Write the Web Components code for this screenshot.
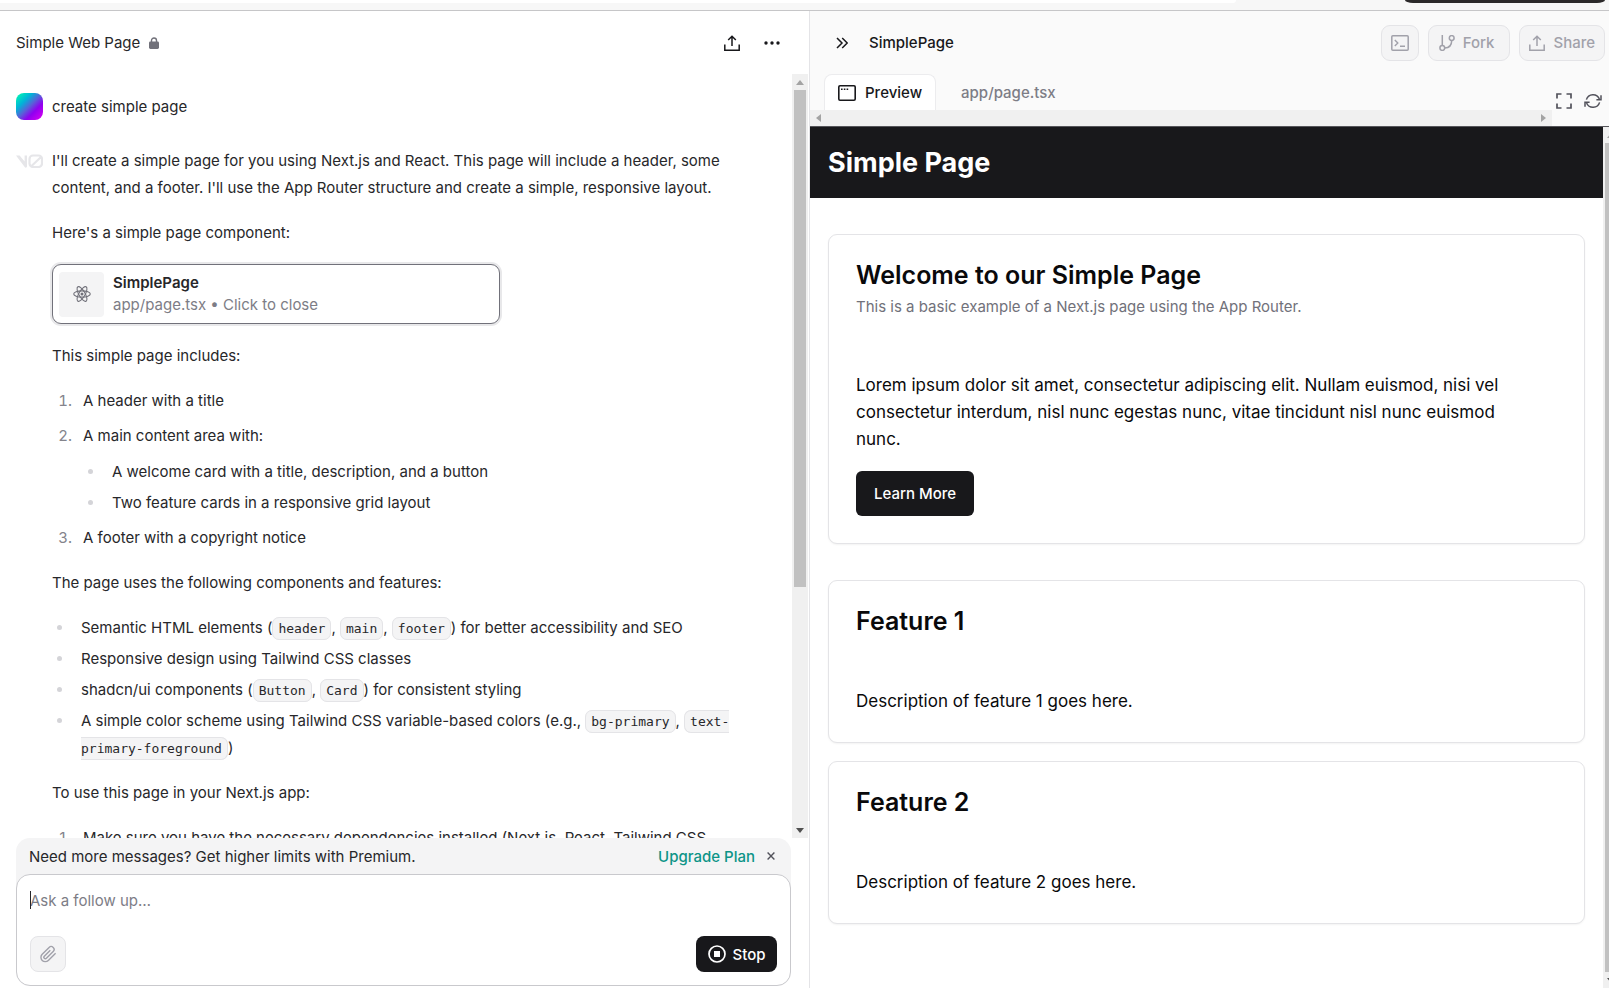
<!DOCTYPE html>
<html lang="en">
<head>
<meta charset="utf-8">
<title>Simple Web Page</title>
<style>
  html, body { height: 100%; margin: 0; }
  body {
    display: flex; flex-direction: column; overflow: hidden;
    font: 400 15px/27px Inter, "Liberation Sans", sans-serif; color: #27272a; background: #fff;
  }
</style>
</head>
<body>
<browser-edge></browser-edge>
<split-view>
  <chat-panel slot="left" heading="Simple Web Page">
    <chat-message>
      <user-avatar slot="avatar"></user-avatar>
      <rich-text><p>create simple page</p></rich-text>
    </chat-message>
    <chat-message>
      <ui-icon slot="avatar" name="v0"></ui-icon>
      <assistant-reply></assistant-reply>
    </chat-message>
    <chat-composer slot="composer"></chat-composer>
  </chat-panel>
  <preview-panel slot="right" heading="SimplePage">
    <site-page></site-page>
  </preview-panel>
</split-view>

<script>
const define = (name, html) => {
  const template = document.createElement('template');
  template.innerHTML = html;
  customElements.define(name, class extends HTMLElement {
    constructor() {
      super();
      this.attachShadow({ mode: 'open' }).append(template.content.cloneNode(true));
    }
    connectedCallback() {
      const h = this.shadowRoot.querySelector('[data-heading]');
      if (h) h.textContent = this.getAttribute('heading');
    }
  });
};

const ICONS = {
  lock: [10, 12, '<path d="M2.5 5V3.5a2.5 2.5 0 0 1 5 0V5" fill="none" stroke="currentColor" stroke-width="1.4"/><rect x="0" y="4.6" width="10" height="7.4" rx="1.4"/>'],
  share: [16, 16, '<path d="M.8 9.5v5.7h14.4V9.5M8 11V1.4M4.2 5 8 1.2 11.8 5" fill="none" stroke="currentColor" stroke-width="1.5"/>'],
  dots: [16, 16, '<circle cx="2" cy="8" r="1.7"/><circle cx="8" cy="8" r="1.7"/><circle cx="14" cy="8" r="1.7"/>'],
  chevrons: [12, 12, '<path d="M1 1l5 5-5 5M6.2 1l5 5-5 5" fill="none" stroke="currentColor" stroke-width="1.5"/>'],
  window: [18, 16, '<rect x=".8" y=".8" width="16.4" height="14.4" rx="1.2" fill="none" stroke="currentColor" stroke-width="1.6"/><path d="M3 3.6h1.6v1.4H3zM5.8 3.6h1.6v1.4H5.8zM8.6 3.6h1.6v1.4H8.6z"/>'],
  terminal: [18, 16, '<rect x=".8" y=".8" width="16.4" height="14.4" rx="1" fill="none" stroke="currentColor" stroke-width="1.5"/><path d="M3.8 5l3 3-3 3M9 11.2h5" fill="none" stroke="currentColor" stroke-width="1.4"/>'],
  fork: [16, 16, '<g fill="none" stroke="currentColor" stroke-width="1.5"><circle cx="3.3" cy="13" r="2.4"/><circle cx="12.7" cy="3" r="2.4"/><path d="M3.3 0v10.6M12.7 5.4c0 4.4-2.6 7.4-7 7.5"/></g>'],
  expand: [16, 16, '<path d="M1 5.5V1h4.500M10.500 1H15v4.500M15 10.500V15h-4.500M5.500 15H1v-4.500" fill="none" stroke="currentColor" stroke-width="1.7"/>'],
  refresh: [18, 16, '<path d="M2.4 6.6A6.9 6.9 0 0 1 15.4 6M17 2.2v4.6h-4.6M15.6 9.4A6.9 6.9 0 0 1 2.6 10M1 13.8V9.2h4.6" fill="none" stroke="currentColor" stroke-width="1.5"/>'],
  react: [18, 18, '<g fill="none" stroke="currentColor" stroke-width="1.1"><ellipse cx="9" cy="9" rx="8.3" ry="3.1"/><ellipse cx="9" cy="9" rx="8.3" ry="3.1" transform="rotate(60 9 9)"/><ellipse cx="9" cy="9" rx="8.3" ry="3.1" transform="rotate(120 9 9)"/></g><circle cx="9" cy="9" r="1.5"/>'],
  clip: [18, 18, '<path d="M16.6 8.2l-7.3 7.2a4.3 4.3 0 0 1-6.1 0 4.3 4.3 0 0 1 0-6.1l6.9-6.9a2.9 2.9 0 0 1 4.1 0 2.9 2.9 0 0 1 0 4.1l-6.8 6.8a1.5 1.5 0 0 1-2.1 0 1.5 1.5 0 0 1 0-2.1l6-6" fill="none" stroke="currentColor" stroke-width="1.4"/>'],
  stop: [18, 18, '<circle cx="9" cy="9" r="8" fill="none" stroke="currentColor" stroke-width="1.7"/><rect x="6" y="6" width="6" height="6"/>'],
  close: [8, 8, '<path d="M.6.6l6.8 6.8M7.4.6L.6 7.4" fill="none" stroke="currentColor" stroke-width="1.4"/>'],
  up: [8, 5, '<path d="M0 5l4-5 4 5z"/>'],
  down: [8, 5, '<path d="M0 0l4 5 4-5z"/>'],
  left: [5, 8, '<path d="M5 0L0 4l5 4z"/>'],
  right: [5, 8, '<path d="M0 0l5 4-5 4z"/>'],
  v0: [27, 14, '<path d="M0 1.500h3.600L8.600 7.500V1.500h2.400v10.800c0 1.300-1.400 1.800-2.300.8z"/><path d="M17 1.500h5.500a3.500 3.500 0 0 1 3.500 3.500v4.500a3.500 3.500 0 0 1-3.500 3.500h-5.500a3.500 3.500 0 0 1-3.500-3.500V5a3.500 3.500 0 0 1 3.500-3.500zM15 12.500L25 3" fill="none" stroke="currentColor" stroke-width="2.200"/>']
};
customElements.define('ui-icon', class extends HTMLElement {
  connectedCallback() {
    const [w, h, body] = ICONS[this.getAttribute('name')];
    if (!this.shadowRoot) this.attachShadow({ mode: 'open' });
    this.shadowRoot.innerHTML =
      `<style>:host{display:inline-flex;flex:none}svg{display:block;fill:currentColor}</style>
       <svg width="${w}" height="${h}" viewBox="0 0 ${w} ${h}" aria-hidden="true">${body}</svg>`;
  }
});

define('browser-edge', `
<style>
  :host { display: flex; flex: none; height: 10px; background: #f7f7f7; border-bottom: 1px solid #c6c6c8; }
  .address { flex: 1; height: 3px; margin-right: 169px; background: #fff; border-radius: 0 0 12px 0; }
  .pill { width: 200px; height: 3px; margin-right: 4px; background: #2b292a; border-radius: 0 0 8px 8px / 0 0 3px 3px; }
</style>
<div class="address"></div><div class="pill"></div>`);

define('split-view', `
<style>
  :host { display: grid; grid-template-columns: 809fr 800fr; flex: 1; min-height: 0; }
  ::slotted(*) { min-width: 0; min-height: 0; }
</style>
<slot name="left"></slot><slot name="right"></slot>`);

define('scroll-bar', `
<style>
  :host { display: flex; flex-direction: column; align-items: center; flex: none; width: 16px;
          background: #f0f0f0; color: #a3a3a3; overflow: hidden; }
  .cap { flex: none; display: flex; align-items: center; justify-content: center; width: 16px; height: 16px; }
  .cap.end { color: #505050; }
  .track { flex: 1; width: 12px; display: flex; flex-direction: column; }
  .thumb { flex: var(--thumb, 1) 0 0; background: #c1c1c1; }
  .rest { flex: var(--rest, 0) 0 0; }
</style>
<div class="cap"><ui-icon name="up"></ui-icon></div>
<div class="track"><div class="thumb"></div><div class="rest"></div></div>
<div class="cap end"><ui-icon name="down"></ui-icon></div>`);

define('chat-panel', `
<style>
  :host { display: flex; flex-direction: column; background: #fff; }
  header { flex: none; height: 63px; box-sizing: border-box; padding: 0 29px 0 16px; display: flex; align-items: center; }
  h1 { margin: 0; font: inherit; }
  .lock { color: #71717a; margin-left: 9px; }
  .spacer { flex: 1; }
  button { all: unset; display: flex; margin-left: 24px; color: #18181b; }
  .body { flex: 1; min-height: 0; display: flex; margin-right: 1px; }
  .log { flex: 1; min-width: 0; overflow: hidden; box-sizing: border-box; padding: 19px 54px 0 16px;
         display: flex; flex-direction: column; gap: 27px; }
  scroll-bar { --thumb: 497; --rest: 235; }
</style>
<header>
  <h1 data-heading></h1><ui-icon class="lock" name="lock"></ui-icon><div class="spacer"></div>
  <button aria-label="Share"><ui-icon name="share"></ui-icon></button>
  <button aria-label="More"><ui-icon name="dots"></ui-icon></button>
</header>
<div class="body"><div class="log"><slot></slot></div><scroll-bar></scroll-bar></div>
<slot name="composer"></slot>`);

define('chat-message', `
<style>
  :host { display: grid; grid-template-columns: 27px 1fr; column-gap: 9px; flex: none; }
  .avatar { height: 27px; display: flex; align-items: center; color: #e6e6e9; }
</style>
<div class="avatar"><slot name="avatar"></slot></div><div><slot></slot></div>`);

define('user-avatar', `
<style>
  :host { display: block; width: 27px; height: 27px; border-radius: 8px;
          background: linear-gradient(135deg, #00f5b4 5%, #00b4d8 30%, #5a5fd8 50%, #8f00f0 68%, #d400f0 95%); }
</style>`);

define('rich-text', `
<style>:host { display: block; } ::slotted(p) { margin: 0; }</style><slot></slot>`);

define('artifact-card', `
<style>
  :host { display: block; max-width: 448px; }
  button { all: unset; box-sizing: border-box; width: 100%; height: 60px; padding: 0 6px; display: flex; align-items: center;
           gap: 9px; background: #fff; border: 1px solid #71717a; border-radius: 9px; box-shadow: 0 0 0 2px #e8e8ea; }
  .thumb { width: 45px; height: 45px; border-radius: 4px; background: #f4f4f5; color: #71717a;
           display: flex; align-items: center; justify-content: center; }
  .text { display: flex; flex-direction: column; line-height: 22px; }
  strong { font-weight: 600; }
  .path { color: #7d7d86; }
</style>
<button>
  <span class="thumb"><ui-icon name="react"></ui-icon></span>
  <span class="text"><strong>SimplePage</strong><span class="path">app/page.tsx • Click to close</span></span>
</button>`);

define('assistant-reply', `
<style>
  :host { display: flex; flex-direction: column; gap: 18px; }
  p, ul, ol { margin: 0; padding: 0; }
  ol { padding-left: 24px; display: flex; flex-direction: column; gap: 8px; }
  ol > li { padding-left: 7px; }
  ul { padding-left: 22px; display: flex; flex-direction: column; gap: 4px; list-style: disc; }
  ul > li { padding-left: 7px; }
  ol ul { margin-top: 9px; }
  ol > li::marker { color: #84848c; }
  ul > li::marker { color: #d4d4d8; }
  code { font: 13px "DejaVu Sans Mono", monospace; padding: 3px 5px; border: 1px solid #e4e4e7;
         border-radius: 7px; background: #f4f4f5; }
</style>
<p>I'll create a simple page for you using Next.js and React. This page will include a header, some content, and a footer. I'll use the App Router structure and create a simple, responsive layout.</p>
<p>Here's a simple page component:</p>
<artifact-card></artifact-card>
<p>This simple page includes:</p>
<ol>
  <li>A header with a title</li>
  <li>A main content area with:
    <ul>
      <li>A welcome card with a title, description, and a button</li>
      <li>Two feature cards in a responsive grid layout</li>
    </ul>
  </li>
  <li>A footer with a copyright notice</li>
</ol>
<p>The page uses the following components and features:</p>
<ul>
  <li>Semantic HTML elements (<code>header</code>, <code>main</code>, <code>footer</code>) for better accessibility and SEO</li>
  <li>Responsive design using Tailwind CSS classes</li>
  <li>shadcn/ui components (<code>Button</code>, <code>Card</code>) for consistent styling</li>
  <li>A simple color scheme using Tailwind CSS variable-based colors (e.g., <code>bg-primary</code>, <code>text-primary-foreground</code>)</li>
</ul>
<p>To use this page in your Next.js app:</p>
<ol>
  <li>Make sure you have the necessary dependencies installed (Next.js, React, Tailwind CSS,</li>
</ol>`);

define('chat-composer', `
<style>
  :host { display: block; flex: none; margin: 0 18px 2px 16px; border-radius: 14px; background: #f4f4f5; }
  .banner { height: 36px; padding: 0 16px 0 13px; display: flex; align-items: center; }
  .banner span { flex: 1; }
  a { color: #0d9488; font-weight: 500; text-decoration: none; margin-right: 12px; }
  button { all: unset; box-sizing: border-box; display: flex; align-items: center; justify-content: center; }
  .close { color: #52525b; }
  form { box-sizing: border-box; height: 112px; padding: 12px 13px 13px; border: 1px solid #c9c9cd; border-radius: 14px;
         background: #fff; display: flex; flex-direction: column; position: relative; }
  textarea { flex: 1; border: 0; padding: 0; margin: 0; resize: none; outline: 0; background: none;
             font: inherit; color: inherit; min-height: 0; overflow: hidden; }
  textarea::placeholder { color: #7d7d86; opacity: 1; }
  .caret { position: absolute; left: 13px; top: 16px; width: 1px; height: 18px; background: #27272a; }
  .row { display: flex; justify-content: space-between; }
  .attach { width: 36px; height: 36px; border: 1px solid #e4e4e7; border-radius: 8px; background: #f4f4f5; color: #a1a1aa; }
  .stop { width: 81px; height: 36px; gap: 7px; border-radius: 8px; background: #18181b; color: #fff; font-weight: 500; }
</style>
<div class="banner">
  <span>Need more messages? Get higher limits with Premium.</span>
  <a href="#upgrade">Upgrade Plan</a>
  <button class="close" aria-label="Dismiss"><ui-icon name="close"></ui-icon></button>
</div>
<form>
  <textarea aria-label="Follow up" placeholder="Ask a follow up…"></textarea>
  <i class="caret"></i>
  <div class="row">
    <button type="button" class="attach" aria-label="Attach file"><ui-icon name="clip"></ui-icon></button>
    <button type="button" class="stop"><ui-icon name="stop"></ui-icon>Stop</button>
  </div>
</form>`);

define('preview-panel', `
<style>
  :host { display: flex; flex-direction: column; background: #fafafa; border-left: 1px solid #e4e4e7; }
  header { flex: none; height: 63px; box-sizing: border-box; padding: 0 4px 0 26px; display: flex; align-items: center; color: #18181b; }
  h2 { margin: 0 0 0 21px; font: inherit; font-weight: 500; flex: 1; }
  button { all: unset; display: flex; align-items: center; justify-content: center; }
  .actions { display: flex; gap: 9px; color: #a1a1aa; }
  .actions button { box-sizing: border-box; height: 36px; padding: 0 9px; gap: 8px; border: 1px solid #e4e4e7;
                    border-radius: 9px; background: #f4f4f5; font-weight: 500; }
  .actions .fork { padding: 0 15px 0 10px; }
  .bar { flex: none; display: flex; height: 52px; }
  .strip { flex: 1; min-width: 0; display: flex; flex-direction: column; }
  .tabs { flex: 1; display: flex; padding-left: 14px; }
  .tabs button { padding: 0 13px; gap: 9px; color: #7d7d86; font-weight: 500; }
  .tabs button[aria-selected=true] { background: #fff; color: #18181b; border: 1px solid #ececee;
                                     border-bottom: 0; border-radius: 8px 8px 0 0; margin-right: 12px; }
  .hbar { height: 16px; padding: 0 6px; display: flex; align-items: center; justify-content: space-between; background: #f0f0f0; color: #a3a3a3; }
  .tools { flex: none; display: flex; align-items: center; gap: 12px; padding: 2px 7px 0 4px; color: #52525b; }
  .frame { flex: 1; min-height: 0; display: flex; border-top: 1px solid #55555a; background: #fff; }
  .page { flex: 1; min-width: 0; overflow: hidden; }
  .edge { flex: none; width: 6px; display: flex; overflow: hidden; }
</style>
<header>
  <button aria-label="Collapse"><ui-icon name="chevrons"></ui-icon></button>
  <h2 data-heading></h2>
  <div class="actions">
    <button aria-label="Console"><ui-icon name="terminal"></ui-icon></button>
    <button class="fork"><ui-icon name="fork"></ui-icon>Fork</button>
    <button><ui-icon name="share"></ui-icon>Share</button>
  </div>
</header>
<div class="bar">
  <div class="strip">
    <div class="tabs" role="tablist">
      <button role="tab" aria-selected="true"><ui-icon name="window"></ui-icon>Preview</button>
      <button role="tab" aria-selected="false">app/page.tsx</button>
    </div>
    <div class="hbar"><ui-icon name="left"></ui-icon><ui-icon name="right"></ui-icon></div>
  </div>
  <div class="tools">
    <button aria-label="Fullscreen"><ui-icon name="expand"></ui-icon></button>
    <button aria-label="Refresh"><ui-icon name="refresh"></ui-icon></button>
  </div>
</div>
<div class="frame"><div class="page"><slot></slot></div><div class="edge"><scroll-bar></scroll-bar></div></div>`);

define('site-page', `
<style>
  :host { display: block; color: #09090b; }
  header { background: #18181b; color: #fff; padding: 22px 18px; }
  h1 { margin: 0; font-size: 27px; line-height: 27px; font-weight: 700; }
  main { padding: 36px 18px; }
  .grid { margin-top: 36px; display: grid; gap: 18px; }
  p { margin: 0 27px 18px 0; font-size: 17px; }
  .grid p { margin: 0; }
  button { all: unset; box-sizing: border-box; height: 45px; padding: 0 18px; display: inline-flex; align-items: center;
           border-radius: 6px; background: #18181b; color: #fff; font-weight: 500; vertical-align: top; }
</style>
<header><h1>Simple Page</h1></header>
<main>
  <site-card heading="Welcome to our Simple Page">
    <span slot="description">This is a basic example of a Next.js page using the App Router.</span>
    <p>Lorem ipsum dolor sit amet, consectetur adipiscing elit. Nullam euismod, nisi vel consectetur interdum, nisl nunc egestas nunc, vitae tincidunt nisl nunc euismod nunc.</p>
    <button>Learn More</button>
  </site-card>
  <div class="grid">
    <site-card heading="Feature 1"><p>Description of feature 1 goes here.</p></site-card>
    <site-card heading="Feature 2"><p>Description of feature 2 goes here.</p></site-card>
  </div>
</main>`);

define('site-card', `
<style>
  :host { display: flex; flex-direction: column; gap: 53px; padding: 27px; border: 1px solid #e4e4e7; border-radius: 9px;
          box-shadow: 0 1px 2px rgb(0 0 0 / 5%); background: #fff; }
  h2 { margin: 0; font-size: 25px; line-height: 27px; font-weight: 600; }
  slot[name=description]::slotted(*) { display: block; margin-top: 6px; line-height: 24px; color: #71717a; }
</style>
<div><h2 data-heading></h2><slot name="description"></slot></div>
<div><slot></slot></div>`);
</script>
</body>
</html>
